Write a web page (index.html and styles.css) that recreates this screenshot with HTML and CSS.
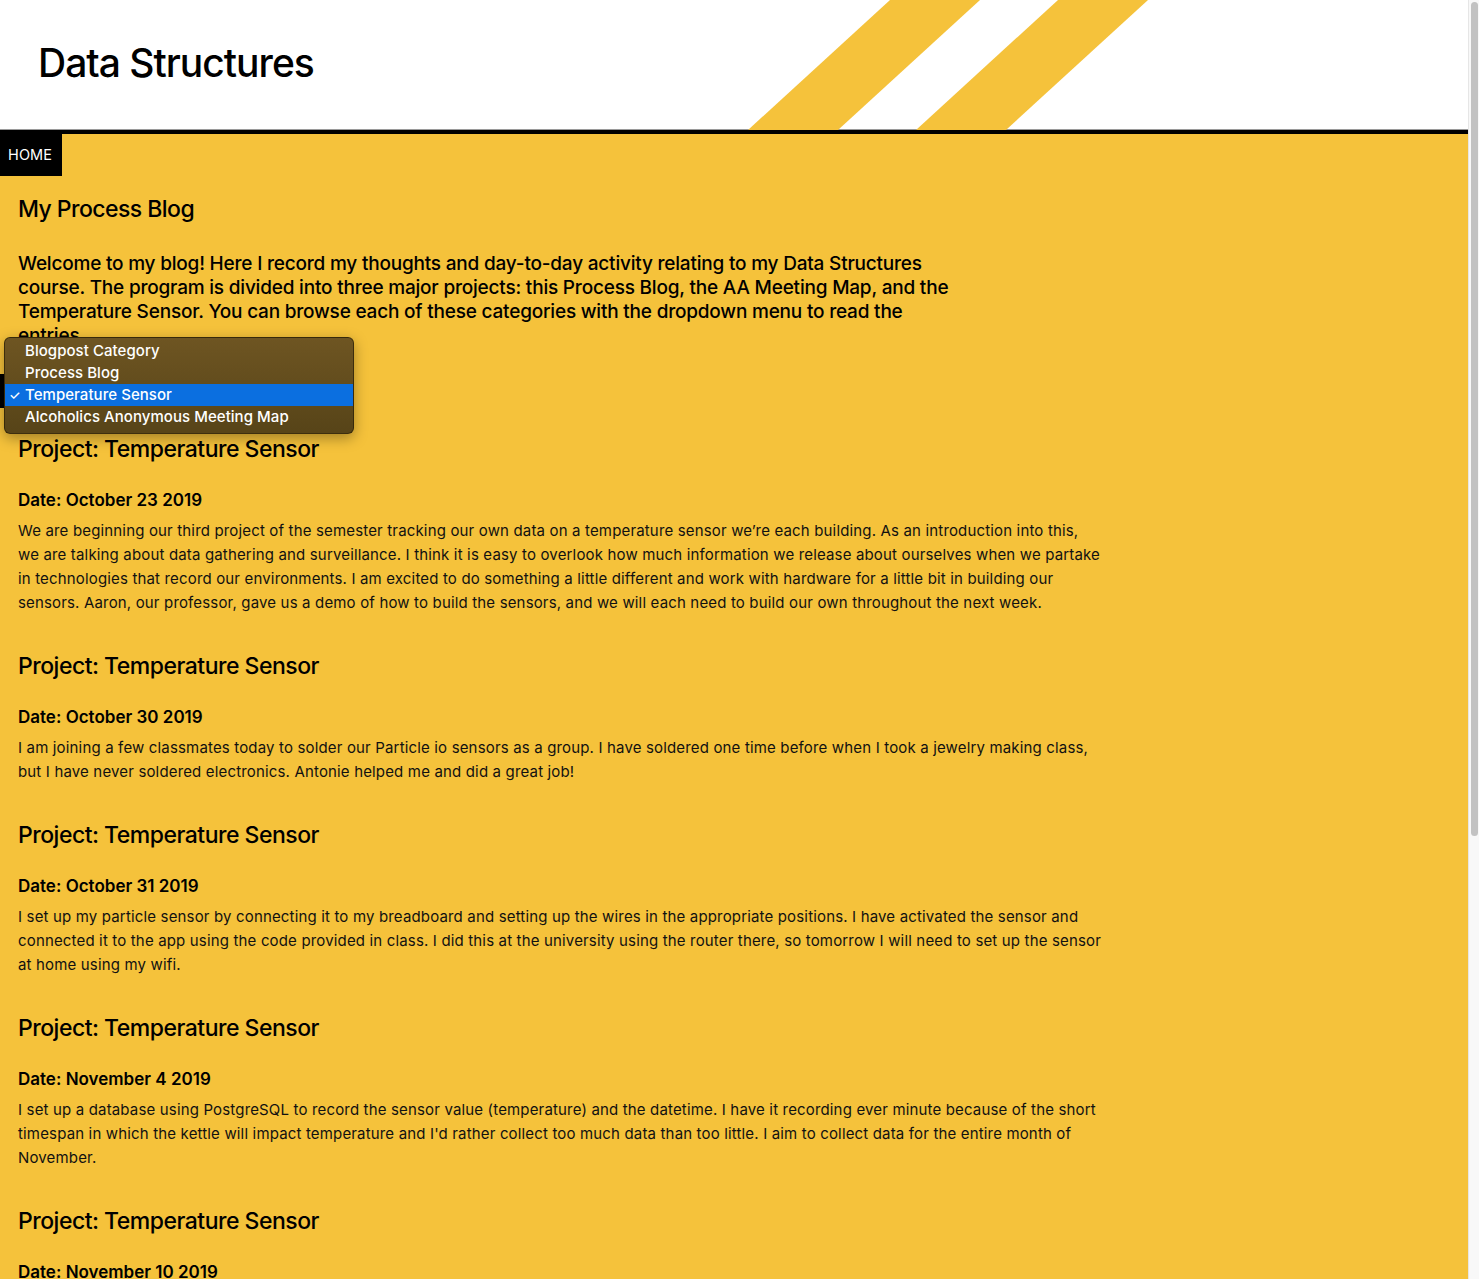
FILE: index.html
```html
<!DOCTYPE html>
<html lang="en">
<head>
<meta charset="utf-8">
<title>Data Structures</title>
<link rel="stylesheet" href="styles.css">
</head>
<body>
<div class="page">
  <header class="site-header">
    <svg class="stripes" width="1468" height="130" viewBox="0 0 1468 130" aria-hidden="true">
      <polygon points="890,0 980,0 838,130 748,130" fill="#f5c23b"/>
      <polygon points="1058,0 1148,0 1006,130 916,130" fill="#f5c23b"/>
    </svg>
    <h1 class="site-title">Data Structures</h1>
  </header>
  <nav class="nav">
    <a class="nav-link" href="#">HOME</a>
  </nav>
  <main class="content">
    <h2 class="blog-title">My Process Blog</h2>
    <p class="intro">Welcome to my blog! Here I record my thoughts and day-to-day activity relating to my Data Structures course. The program is divided into three major projects: this Process Blog, the AA Meeting Map, and the Temperature Sensor. You can browse each of these categories with the dropdown menu to read the entries.</p>
    <div class="select-wrap">
      <div class="select-box"></div>
      <div class="popup" role="listbox">
        <div class="option">Blogpost Category</div>
        <div class="option">Process Blog</div>
        <div class="option selected"><span class="check">✓</span>Temperature Sensor</div>
        <div class="option">Alcoholics Anonymous Meeting Map</div>
      </div>
    </div>

    <article class="entry">
      <h2 class="entry-title">Project: Temperature Sensor</h2>
      <h4 class="entry-date">Date: October 23 2019</h4>
      <p class="entry-text">We are beginning our third project of the semester tracking our own data on a temperature sensor we’re each building. As an introduction into this, we are talking about data gathering and surveillance. I think it is easy to overlook how much information we release about ourselves when we partake in technologies that record our environments. I am excited to do something a little different and work with hardware for a little bit in building our sensors. Aaron, our professor, gave us a demo of how to build the sensors, and we will each need to build our own throughout the next week.</p>
    </article>
    <article class="entry">
      <h2 class="entry-title">Project: Temperature Sensor</h2>
      <h4 class="entry-date">Date: October 30 2019</h4>
      <p class="entry-text">I am joining a few classmates today to solder our Particle io sensors as a group. I have soldered one time before when I took a jewelry making class, but I have never soldered electronics. Antonie helped me and did a great job!</p>
    </article>
    <article class="entry">
      <h2 class="entry-title">Project: Temperature Sensor</h2>
      <h4 class="entry-date">Date: October 31 2019</h4>
      <p class="entry-text">I set up my particle sensor by connecting it to my breadboard and setting up the wires in the appropriate positions. I have activated the sensor and connected it to the app using the code provided in class. I did this at the university using the router there, so tomorrow I will need to set up the sensor at home using my wifi.</p>
    </article>
    <article class="entry">
      <h2 class="entry-title">Project: Temperature Sensor</h2>
      <h4 class="entry-date">Date: November 4 2019</h4>
      <p class="entry-text">I set up a database using PostgreSQL to record the sensor value (temperature) and the datetime. I have it recording ever minute because of the short timespan in which the kettle will impact temperature and I'd rather collect too much data than too little. I aim to collect data for the entire month of November.</p>
    </article>
    <article class="entry">
      <h2 class="entry-title">Project: Temperature Sensor</h2>
      <h4 class="entry-date">Date: November 10 2019</h4>
      <p class="entry-text">I checked on the sensor data today and everything is recording as expected.</p>
    </article>
  </main>
</div>
<div class="scrollbar"><div class="thumb"></div></div>
</body>
</html>
```
FILE: styles.css
```css
html {
  overflow: hidden;
  background: #f5c23b;
}
body {
  margin: 0;
  font-family: Inter, "Noto Sans", "Liberation Sans", sans-serif;
  color: #000;
  background: #f5c23b;
}
.page {
  margin-right: 11px;
  min-height: 1279px;
  background: #f5c23b;
}
.site-header {
  position: relative;
  height: 130px;
  background: #fff;
  border-bottom: 4px solid #000;
  box-shadow: 0 -1px 0 #9a9a9a inset;
}
.stripes {
  position: absolute;
  left: 0;
  top: 0;
}
.site-title {
  position: relative;
  margin: 0;
  padding: 40px 0 0 38px;
  font-size: 39px;
  font-weight: 500;
  line-height: 46px;
  letter-spacing: -1px;
}
.nav {
  display: flex;
}
.nav-link {
  display: block;
  background: #000;
  color: #fff;
  text-decoration: none;
  font-size: 14.5px;
  line-height: 42px;
  padding: 0 10px 0 8px;
  letter-spacing: 0.1px;
}
.content {
  padding: 18px 0 0 18px;
}
.blog-title {
  margin: 0;
  font-size: 23px;
  font-weight: 500;
  line-height: 30px;
  letter-spacing: -0.55px;
}
.intro {
  margin: 28px 0 0;
  max-width: 940px;
  font-size: 19px;
  font-weight: 500;
  line-height: 24px;
  letter-spacing: -0.2px;
}
.select-wrap {
  position: relative;
  height: 34px;
  margin: 26px 0 0 -18px;
}
.select-box {
  width: 200px;
  height: 34px;
  background: #000;
}
.popup {
  position: absolute;
  left: 4px;
  top: -37px;
  width: 348px;
  padding: 2px 0 5px;
  border: 1px solid rgba(40, 30, 5, 0.7);
  border-radius: 6px;
  background: linear-gradient(#6e5522, #574418);
  box-shadow: 0 4px 14px rgba(0, 0, 0, 0.35);
  color: #fff;
  font-size: 15px;
  font-weight: 500;
}
.option {
  position: relative;
  height: 22px;
  line-height: 22px;
  padding-left: 20px;
  letter-spacing: 0.05px;
}
.option.selected {
  background: #0b6fe0;
}
.check {
  position: absolute;
  left: 4px;
  top: 0;
  font-size: 13px;
}
.entry {
  margin-top: 26px;
}
.entry + .entry {
  margin-top: 36px;
}
.entry-title {
  margin: 0;
  font-size: 23px;
  font-weight: 500;
  line-height: 30px;
  letter-spacing: -0.5px;
}
.entry-date {
  margin: 26px 0 9px;
  font-size: 17px;
  font-weight: 600;
  line-height: 20px;
}
.entry-text {
  margin: 0;
  max-width: 1085px;
  font-size: 15px;
  line-height: 24px;
  letter-spacing: 0.16px;
  color: #111;
}
.scrollbar {
  position: fixed;
  top: 0;
  right: 0;
  width: 10px;
  height: 100%;
  background: #f8f8f8;
  border-left: 1px solid #e6e6e6;
}
.thumb {
  margin: 2px 1px 0 2px;
  height: 834px;
  border-radius: 4px;
  background: #c2c2c2;
}
```
